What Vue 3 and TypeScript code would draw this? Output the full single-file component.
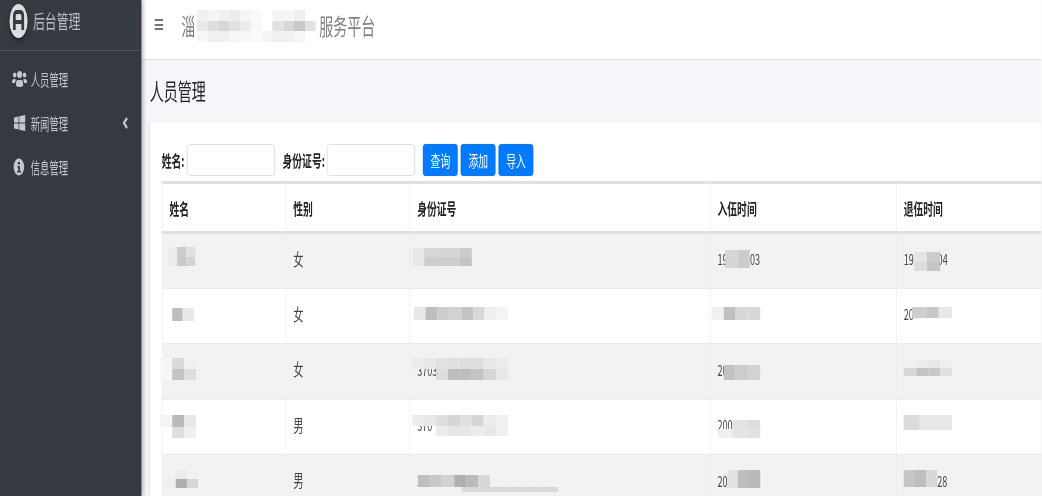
<script setup lang="ts">
interface Cell { a: string; gap?: number; b?: string }
interface Row { name: string; sex: string; id: Cell; inD: Cell; outD: Cell }
interface Patch { x: number; y: number; tw: number; th: number; rows: number[][] }

const SX = 0.7

const rows: Row[] = [
  { name: '', sex: '女', id: { a: '' }, inD: { a: '19', gap: 32, b: '03' }, outD: { a: '19', gap: 34, b: '04' } },
  { name: '', sex: '女', id: { a: '' }, inD: { a: '' }, outD: { a: '20' } },
  { name: '', sex: '女', id: { a: '3703' }, inD: { a: '20' }, outD: { a: '' } },
  { name: '', sex: '男', id: { a: '370' }, inD: { a: '200' }, outD: { a: '' } },
  { name: '', sex: '男', id: { a: '3' }, inD: { a: '20' }, outD: { a: '', gap: 48, b: '28' } },
]

const patches: Patch[] = [
  { x: 197, y: 10, tw: 10.8, th: 10.7, rows: [
    [240, 246, 240, 236, 246, 250, 0, 244, 246, 240, 0],
    [232, 222, 214, 226, 236, 248, 0, 226, 216, 200, 226],
    [248, 240, 240, 246, 248, 250, 244, 240, 240, 246, 0],
  ] },
  { x: 168, y: 247, tw: 9, th: 9.5, rows: [[236, 204, 224], [236, 200, 212]] },
  { x: 412, y: 248, tw: 12, th: 9, rows: [[232, 214, 214, 214, 204], [232, 206, 206, 206, 196]] },
  { x: 725, y: 250, tw: 12.5, th: 18, rows: [[214, 204]] },
  { x: 914, y: 252, tw: 13, th: 9.5, rows: [[228, 204], [220, 198]] },
  { x: 172, y: 308, tw: 11, th: 12.5, rows: [[190, 232]] },
  { x: 414, y: 307, tw: 11.8, th: 13, rows: [[232, 190, 204, 210, 196, 216, 238, 244]] },
  { x: 712, y: 307, tw: 12, th: 13, rows: [[240, 192, 216, 216]] },
  { x: 912, y: 307, tw: 13.3, th: 11, rows: [[206, 200, 232]] },
  { x: 160, y: 358, tw: 12, th: 11, rows: [[246, 218, 240], [246, 196, 222]] },
  { x: 412, y: 358, tw: 12, th: 11, rows: [[236, 232, 226, 224, 222, 222, 232, 236], [0, 0, 220, 190, 190, 196, 214, 232]] },
  { x: 724, y: 365, tw: 12, th: 15, rows: [[194, 204, 210]] },
  { x: 904, y: 360, tw: 12, th: 8, rows: [[240, 236, 232, 238], [216, 196, 200, 224]] },
  { x: 160, y: 415, tw: 12, th: 11.5, rows: [[244, 186, 232], [0, 222, 240]] },
  { x: 412, y: 415, tw: 12, th: 10.5, rows: [[236, 232, 222, 214, 224, 214, 236, 240], [0, 0, 236, 230, 230, 236, 232, 240]] },
  { x: 718, y: 420, tw: 14, th: 9, rows: [[0, 226, 222], [240, 228, 226]] },
  { x: 904, y: 415, tw: 16, th: 15, rows: [[220, 232, 232]] },
  { x: 165, y: 470, tw: 11, th: 9, rows: [[0, 236, 0], [238, 174, 214]] },
  { x: 418, y: 475, tw: 12, th: 12, rows: [[190, 200, 210, 176, 186, 216]] },
  { x: 462, y: 487, tw: 16, th: 5, rows: [[216, 216, 216, 216, 216, 216]] },
  { x: 727, y: 470, tw: 11, th: 18, rows: [[226, 190, 186]] },
  { x: 904, y: 470, tw: 11, th: 17, rows: [[198, 190, 216]] },
]

function patchBox(p: Patch) {
  return { left: p.x / SX + 'px', top: p.y + 'px', width: (p.rows[0].length * p.tw) / SX + 'px' }
}
function tileStyle(p: Patch, v: number) {
  return {
    width: p.tw / SX + 'px',
    height: p.th + 'px',
    background: v ? `rgb(${v},${v},${v})` : 'transparent',
  }
}
</script>

<template>
  <div class="page">
    <aside class="side">
      <div class="brand">
        <svg class="logo" width="27" height="36" viewBox="0 0 27 36">
          <ellipse cx="13.5" cy="18" rx="13" ry="17" fill="#dcdcdc" />
          <path d="M7.500 27V13q0-4 4-4h4q4 0 4 4v14M7.500 19h12" fill="none" stroke="#343a40" stroke-width="3.800" />
        </svg>
        <span class="t">后台管理</span>
      </div>
      <nav class="menu">
        <a class="item">
          <svg class="ic" width="22" height="18" viewBox="0 0 22 18" fill="#c2c7d0">
            <circle cx="4" cy="5" r="2.600" /><circle cx="18" cy="5" r="2.600" /><circle cx="11" cy="4.500" r="3.600" />
            <path d="M0 13q0-4 3.500-4 1.500 0 2.500 1-1.500 1-1.500 3zM22 13q0-4-3.500-4-1.500 0-2.500 1 1.500 1 1.500 3zM6 16v-3q0-3 3-3h4q3 0 3 3v3q-5 2-10 0z" />
          </svg>
          <span class="t narrow">人员管理</span>
        </a>
        <a class="item">
          <svg class="ic" width="22" height="18" viewBox="0 0 22 18" fill="#c2c7d0">
            <path d="M3 3.500l6.500-1v6H3zM10.500 2.300L19 1v7.500h-8.500zM3 9.500h6.500v6l-6.500-1zM10.500 9.500H19V17l-8.500-1.300z" />
          </svg>
          <span class="t narrow">新闻管理</span>
          <svg class="chev" width="8" height="12" viewBox="0 0 8 12">
            <path d="M6.500 1L2 6l4.500 5" fill="none" stroke="#c2c7d0" stroke-width="2.800" />
          </svg>
        </a>
        <a class="item">
          <svg class="ic" width="22" height="18" viewBox="0 0 22 18">
            <ellipse cx="10" cy="9" rx="7.500" ry="8.500" fill="#c2c7d0" />
            <path d="M8.500 4h3v2.500h-3zM8 8h3.500v5H13v1.500H7.500V13H9V9.500H8z" fill="#343a40" />
          </svg>
          <span class="t narrow">信息管理</span>
        </a>
      </nav>
    </aside>

    <main class="main">
      <header class="top">
        <div class="burger"><i></i><i></i><i></i></div>
        <div class="site t"><span>淄</span><span class="site-gap"></span><span>服务平台</span></div>
      </header>

      <div class="head"><h1 class="t">人员管理</h1></div>

      <section class="card">
        <form class="filter" @submit.prevent>
          <label for="f-name" class="t">姓名:</label>
          <input id="f-name" type="text" />
          <label for="f-id" class="t second">身份证号:</label>
          <input id="f-id" type="text" />
          <div class="btns">
            <button type="button"><span class="t">查询</span></button>
            <button type="button"><span class="t">添加</span></button>
            <button type="button"><span class="t">导入</span></button>
          </div>
        </form>

        <table class="grid">
          <colgroup>
            <col class="c1" /><col class="c2" /><col class="c3" /><col class="c4" /><col class="c5" />
          </colgroup>
          <thead>
            <tr>
              <th><span class="t">姓名</span></th>
              <th><span class="t">性别</span></th>
              <th><span class="t">身份证号</span></th>
              <th><span class="t">入伍时间</span></th>
              <th><span class="t">退伍时间</span></th>
            </tr>
          </thead>
          <tbody>
            <tr v-for="(r, i) in rows" :key="i">
              <td>{{ r.name }}</td>
              <td class="sex"><span class="t">{{ r.sex }}</span></td>
              <td class="num"><span class="t">{{ r.id.a }}</span></td>
              <td class="num"><span class="t">{{ r.inD.a }}<span class="gap" :style="{ width: (r.inD.gap ?? 0) + 'px' }"></span>{{ r.inD.b }}</span></td>
              <td class="num"><span class="t">{{ r.outD.a }}<span class="gap" :style="{ width: (r.outD.gap ?? 0) + 'px' }"></span>{{ r.outD.b }}</span></td>
            </tr>
          </tbody>
        </table>
      </section>
    </main>

    <div v-for="(p, i) in patches" :key="'p' + i" class="patch" :style="patchBox(p)">
      <template v-for="(row, ri) in p.rows" :key="ri">
        <span v-for="(v, ci) in row" :key="ci" class="tile" :style="tileStyle(p, v)"></span>
      </template>
    </div>
  </div>
</template>

<style>
html, body { margin: 0; overflow: hidden; width: 1042px; height: 496px; background: #fff; }
</style>

<style scoped>
.page {
  position: relative;
  display: flex;
  width: 1488px;
  height: 496px;
  overflow: hidden;
  transform: scaleX(0.7);
  transform-origin: 0 0;
  filter: blur(0.45px);
  font-family: "Noto Sans CJK SC", "Liberation Sans", sans-serif;
  font-size: 14px;
  color: #212529;
}
.t { display: inline-block; transform: scaleY(1.15); transform-origin: left center; }
.narrow { transform: scale(0.95, 1.15); }
.side {
  flex: 0 0 202px;
  background: #343a40;
  color: #c2c7d0;
  box-shadow: 2px 0 5px rgba(0, 0, 0, .3);
  z-index: 1;
}
.brand {
  display: flex;
  align-items: center;
  gap: 7px;
  height: 50px;
  padding: 0 0 0 13px;
  border-bottom: 1px solid #4b545c;
  font-size: 17px;
  color: #b9bdc3;
}
.logo { flex: none; margin-top: -9px; filter: drop-shadow(0 2px 2px rgba(0, 0, 0, .5)); }
.brand span { margin-top: -10px; }
.menu { display: flex; flex-direction: column; padding-top: 6px; }
.item { display: flex; align-items: center; height: 44px; padding-left: 17px; font-size: 14px; }
.ic { flex: none; margin-right: 5px; }
.chev { margin-left: 75px; flex: none; }
.main { flex: 1; min-width: 0; display: flex; flex-direction: column; background: #f4f6f9; }
.top {
  display: flex;
  align-items: center;
  height: 59px;
  padding-left: 19px;
  background: #fff;
  border-bottom: 1px solid #dee2e6;
  flex: none;
}
.burger { display: flex; flex-direction: column; gap: 2.500px; width: 12px; margin-top: -10px; }
.burger i { display: block; height: 2px; background: #6c757d; }
.site { display: flex; margin-left: 26px; margin-top: -9px; font-size: 20px; color: #7f8283; }
.site-gap { width: 177px; }
.head { height: 62px; flex: none; display: flex; align-items: center; padding-left: 12px; }
h1 { margin: 0 0 2px; font-size: 20px; font-weight: 400; color: #212529; }
.card {
  flex: 1;
  margin-left: 12px;
  padding: 22px 0 0 17px;
  background: #fff;
  border-radius: 4px 0 0 0;
  box-shadow: 0 0 2px rgba(0, 0, 0, .1);
  overflow: hidden;
}
.filter { display: flex; align-items: center; height: 32px; margin-bottom: 5px; }
label { font-weight: 700; font-size: 14px; margin-right: 3px; }
label.second { margin-left: 11px; margin-right: 3px; }
input {
  box-sizing: border-box;
  width: 126px;
  height: 32px;
  border: 1px solid #d6dae0;
  border-radius: 4px;
  background: #fff;
}
.btns { display: flex; gap: 4px; margin-left: 11px; }
button {
  width: 50px;
  height: 32px;
  padding: 0;
  border: 0;
  border-radius: 4px;
  background: #007bff;
  color: #fff;
  font: inherit;
  font-size: 14px;
}
.grid { border-collapse: collapse; table-layout: fixed; width: 1257px; }
.c1, .c2 { width: 177px; }
.c3 { width: 429px; }
.c4 { width: 266px; }
.c5 { width: 208px; }
th, td {
  box-sizing: border-box;
  padding: 0 10px;
  border: 1px solid #e8ebef;
  text-align: left;
  vertical-align: middle;
}
thead tr { height: 50px; }
th { font-weight: 700; border-top: 3px solid #dee2e6; border-bottom: 3px solid #dee2e6; }
tbody tr { height: 55.500px; }
tbody tr:nth-child(odd) { background: #f2f2f2; }
td { color: #444; padding-bottom: 4px; }
.sex .t { transform: scale(1.05, 1.2); }
.num { font-size: 13px; }
.gap { display: inline-block; }
.patch { position: absolute; display: flex; flex-wrap: wrap; z-index: 2; }
.tile { display: block; flex: none; }
</style>
